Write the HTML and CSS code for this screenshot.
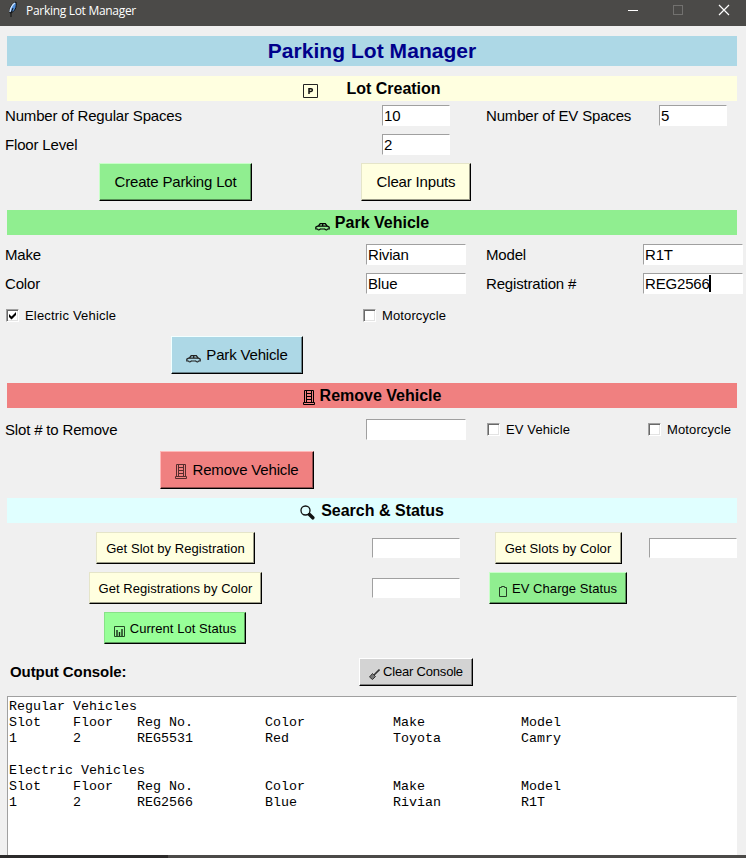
FILE: index.html
```html
<!DOCTYPE html>
<html lang="en">
<head>
<meta charset="utf-8">
<title>Parking Lot Manager</title>
<link rel="stylesheet" href="styles.css">
</head>
<body>
<svg class="defs" aria-hidden="true">
  <symbol id="car" viewBox="0 0 15 9"><path d="M3.500 4 5.200 1.700H10.300L12 4M7.700 1.700V4" fill="none" stroke="currentColor" stroke-width="1.300"/><path d="M2.500 7H.8V5.200L2.500 4.200H12.500L14.200 5.200V7H12.500M10 7H5" fill="none" stroke="currentColor" stroke-width="1.200"/><path d="M2.600 6.800a1.200 1.200 0 0 0 2.400 0M10 6.800a1.200 1.200 0 0 0 2.400 0" fill="none" stroke="currentColor" stroke-width="1.200"/></symbol>
  <symbol id="door" viewBox="0 0 12 15"><path d="M1.500 13V.5H10.500V13M3.500 1V13M8.500 1V13M.5 12.500H11.500V14.500H.5ZM4 3.500H8M4 6.500H8M4 9.500H8" fill="none" stroke="currentColor"/></symbol>
</svg>
<header class="titlebar">
  <svg class="feather" viewBox="0 0 12 18"><path d="M3 12C2 7 5 2 9 1C10 6 8 11 3 12Z" fill="#4c8bd8" stroke="#111"/><path d="M3 11C3 7 6 3 8 2" stroke="#cfe5ff" fill="none" stroke-width="1.300"/><path d="M6 7 4 12V16" stroke="#111" fill="none"/></svg>
  <span class="caption">Parking Lot Manager</span>
  <svg class="controls" viewBox="0 0 110 16"><path d="M5 7.500H15" stroke="#fff"/><rect x="50.500" y="2.500" width="9" height="9" fill="none" stroke="#72716f"/><path d="M96 2 106 12M106 2 96 12" stroke="#fff" stroke-width="1.200"/></svg>
</header>
<main>
  <h1 class="banner"><span>Parking Lot Manager</span></h1>

  <h2 class="section cream"><svg class="p-icon" viewBox="0 0 15 14"><path d="M.5 .5H14.500V13.500H.5Z" fill="none" stroke="#222"/><path d="M6 10V4.700H8A1.300 1.300 0 0 1 8 7.500H6" fill="none" stroke="#111" stroke-width="1.500"/></svg><span>Lot Creation</span></h2>
  <div class="row">
    <label>Number of Regular Spaces</label><div class="field small">10</div>
    <label>Number of EV Spaces</label><div class="field small">5</div>
  </div>
  <div class="row"><label>Floor Level</label><div class="field small">2</div></div>
  <div class="row actions">
    <button class="big green b-create"><span>Create Parking Lot</span></button>
    <button class="big cream b-inputs"><span>Clear Inputs</span></button>
  </div>

  <h2 class="section green"><svg class="car"><use href="#car"/></svg><span>Park Vehicle</span></h2>
  <div class="row first">
    <label>Make</label><div class="field">Rivian</div><label>Model</label><div class="field">R1T</div>
  </div>
  <div class="row">
    <label>Color</label><div class="field">Blue</div><label>Registration #</label><div class="field">REG2566<i class="caret"></i></div>
  </div>
  <div class="row checks">
    <div class="check electric"><i class="box"><svg viewBox="0 0 9 9"><path d="M1 3V6L3.500 8.500 8 4V1L3.500 5.500Z"/></svg></i><span>Electric Vehicle</span></div>
    <div class="check second"><i class="box"></i><span>Motorcycle</span></div>
  </div>
  <div class="row actions wide"><button class="big blue b-park"><svg class="car"><use href="#car"/></svg><span>Park Vehicle</span></button></div>

  <h2 class="section coral"><svg class="door"><use href="#door"/></svg><span>Remove Vehicle</span></h2>
  <div class="row remove">
    <label>Slot # to Remove</label><div class="field"></div>
    <div class="check"><i class="box"></i><span>EV Vehicle</span></div>
    <div class="check last"><i class="box"></i><span>Motorcycle</span></div>
  </div>
  <div class="row actions wide"><button class="big coral b-remove"><svg class="door"><use href="#door"/></svg><span>Remove Vehicle</span></button></div>

  <h2 class="section cyan"><svg class="search" viewBox="0 0 15 15"><circle cx="5.500" cy="5.500" r="4.500" fill="none" stroke="#111" stroke-width="1.300"/><path d="M9.500 9.500 12.800 12.800" stroke="#111" stroke-width="3.500" stroke-linecap="round"/></svg><span>Search &amp; Status</span></h2>
  <div class="row query first">
    <button class="cream b-slot"><span>Get Slot by Registration</span></button><div class="field short"></div>
    <button class="cream b-slots"><span>Get Slots by Color</span></button><div class="field short"></div>
  </div>
  <div class="row query">
    <button class="cream b-regs"><span>Get Registrations by Color</span></button><div class="field short"></div>
    <button class="green b-charge"><svg class="battery" viewBox="0 0 8 11"><path d="M.5 1.500H2.500V.5H5.500V1.500H7.500V10.500H.5Z" fill="none" stroke="#263f26"/></svg><span>EV Charge Status</span></button>
  </div>
  <div class="row query">
    <button class="mint b-status"><svg class="chart" viewBox="0 0 11 11"><path d="M.5 .5H10.500V10.500H.5Z" fill="none" stroke="#244a24"/><path d="M3 4V10M5.500 6V10M8 3V10" stroke="#182c18" stroke-width="1.400"/></svg><span>Current Lot Status</span></button>
  </div>
  <div class="row output">
    <strong>Output Console:</strong>
    <button class="gray b-console"><svg class="broom" viewBox="0 0 11 11"><path d="M10.500 .5 5 6" stroke="#333" stroke-width="1.600"/><path d="M3.500 4.500 6.500 7.500 3.500 10.500 .5 8Z" fill="#777" stroke="#333"/></svg><span>Clear Console</span></button>
  </div>
  <pre class="console">Regular Vehicles
Slot    Floor   Reg No.         Color           Make            Model
1       2       REG5531         Red             Toyota          Camry

Electric Vehicles
Slot    Floor   Reg No.         Color           Make            Model
1       2       REG2566         Blue            Rivian          R1T</pre>
</main>
<footer class="taskbar"></footer>
</body>
</html>
```
FILE: styles.css
```css
* { box-sizing: border-box; }
body { margin: 0; width: 746px; height: 858px; overflow: hidden; background: #f0f0f0; color: #000; font: 15px/17px "Liberation Sans", Arial, sans-serif; }
.defs { display: none; }
svg { flex: none; }
.titlebar { display: flex; height: 26px; background: #4b4a48; color: #fff; padding-left: 7px; }
.feather { width: 12px; height: 18px; margin-top: 1px; }
.caption { font: 12px/22px "Open Sans", "Noto Sans", sans-serif; margin-left: 7px; letter-spacing: -.3px; }
.controls { width: 110px; height: 16px; margin: 3px 13px 0 auto; }
main { display: flow-root; height: 829px; }
h1, h2 { margin: 0 9px 0 7px; display: flex; justify-content: center; align-items: center; }
.banner { height: 30px; margin-top: 10px; background: #add8e6; color: #00008b; font-size: 21px; line-height: 30px; letter-spacing: .05px; }
.section { height: 25px; margin-top: 5px; font-size: 16px; line-height: 25px; }
.banner + .section { margin-top: 10px; }
.section svg { margin-top: 8px; margin-right: 5px; }
.section .p-icon { width: 15px; height: 14px; margin: 5px 28px 0 0; }
.car { width: 15px; height: 9px; }
.door { width: 12px; height: 15px; }
.section .door { margin-top: 4px; }
.section .search { width: 15px; height: 15px; margin-top: 4px; margin-right: 6px; }
.cream { background: #ffffe0; }
.green { background: #90ee90; }
.blue { background: #add8e6; }
.coral { background: #f08080; }
.cyan { background: #e0ffff; }
.mint { background: #98ff98; }
.gray { background: #d3d3d3; }
.row { display: grid; grid-template-columns: 351px 130px 154px 116px; align-items: center; justify-items: center; height: 29px; }
.row.first { margin-top: 5px; }
label { justify-self: start; padding-left: 5px; letter-spacing: -.17px; }
.field { width: 100px; height: 21px; background: #fff; border: 1px solid #fff; border-top-color: #a0a0a0; border-left-color: #a0a0a0; padding-left: 1px; line-height: 20px; letter-spacing: -.17px; display: flex; }
.small { width: 68px; }
.short { width: 88px; height: 20px; }
.caret { width: 2px; height: 17px; margin: 1px 0 0 -1px; background: #000; }
.actions { height: 46px; }
.wide { grid-template-columns: 474px; }
.checks { height: 34px; }
.remove { height: 35px; margin-top: 4px; }
.check { display: flex; align-items: center; justify-self: start; font-size: 13px; letter-spacing: .12px; padding-left: 6px; gap: 6px; }
.check.electric { letter-spacing: .19px; }
.check.second { padding-left: 12px; }
.check.last { padding-left: 13px; }
.box { width: 13px; height: 13px; background: #fff; border: 1px solid #fff; border-top-color: #a0a0a0; border-left-color: #a0a0a0; box-shadow: inset 1px 1px #696969, inset -1px -1px #e3e3e3; }
.box svg { display: block; width: 9px; height: 9px; margin: 1px; }
button { display: flex; align-items: center; justify-content: center; gap: 5px; padding: 0; height: 32px; border: 1px solid #000; border-top-color: #e5e5c9; border-left-color: #e5e5c9; box-shadow: inset -1px -1px #9b9b87; color: #000; font: 13px/17px "Liberation Sans", Arial, sans-serif; letter-spacing: .06px; white-space: nowrap; }
button.green { border-top-color: #c9ffc9; border-left-color: #c9ffc9; box-shadow: inset -1px -1px #569056; }
button.blue { border-top-color: #f2ffff; border-left-color: #f2ffff; box-shadow: inset -1px -1px #68828a; }
button.coral { border-top-color: #ffb8b8; border-left-color: #ffb8b8; box-shadow: inset -1px -1px #904d4d; }
button.mint { border-top-color: #88e288; border-left-color: #88e288; box-shadow: inset -1px -1px #5b975b; }
button.gray { border-top-color: #fff; border-left-color: #fff; box-shadow: inset -1px -1px #7f7f7f; }
button.big { height: 38px; font-size: 15px; letter-spacing: -.17px; padding-bottom: 2px; }
button svg { margin-top: 6px; }
button .car { margin-top: 8px; color: #222; }
button .door { margin-top: 4px; color: #572c2c; }
.b-create { width: 153px; }
.b-inputs { width: 110px; }
.b-park { width: 132px; }
.b-remove { width: 154px; }
.query { height: 40px; }
.b-slot { width: 159px; }
.b-slots { width: 127px; }
.b-regs { width: 173px; }
.b-charge { width: 138px; }
.b-status { width: 142px; margin-right: 1px; }
.battery { width: 8px; height: 11px; }
.chart, .broom { width: 11px; height: 11px; }
.output { height: 48px; }
.output strong { justify-self: start; padding: 0 0 2px 10px; font-size: 15px; letter-spacing: -.07px; }
button.b-console { width: 114px; height: 28px; gap: 3px; letter-spacing: -.2px; padding-bottom: 1px; }
.console { height: 159px; margin: 0 9px 0 7px; background: #fff; border: 1px solid #a0a0a0; border-right-color: #fff; border-bottom: 0; padding: 2px 0 0 1px; font: 13.333px/16px "Liberation Mono", "Courier New", monospace; }
.taskbar { height: 3px; background: linear-gradient(90deg, #2b2a2a 168px, #4b4a48 168px); }
```
